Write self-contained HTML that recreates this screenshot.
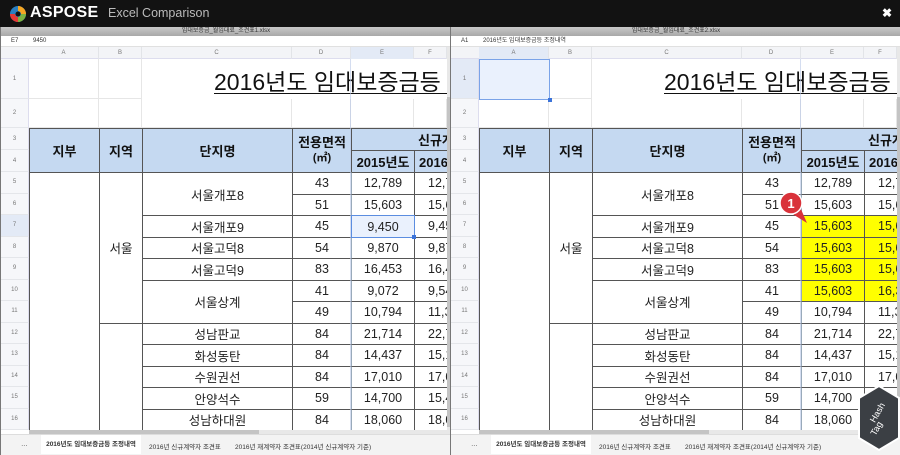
<!DOCTYPE html>
<html><head><meta charset="utf-8">
<style>
*{box-sizing:border-box;margin:0;padding:0}
body{width:900px;height:455px;overflow:hidden;background:#fff;font-family:"Liberation Sans","Noto Sans CJK KR",sans-serif;position:relative}
#top{position:absolute;left:0;top:0;width:900px;height:27px;background:#121212;color:#fff}
.pane{position:absolute;top:27px;height:428px;overflow:hidden;background:#fff;border-left:1px solid #777}
.abs{position:absolute}
.c{position:absolute;display:flex;align-items:center;justify-content:center;font-size:12.5px;color:#222;white-space:nowrap;overflow:hidden}
.rh{position:absolute;left:0;width:28px;font-size:6px;color:#777;display:flex;align-items:center;justify-content:center;background:#f6f7fa;border-bottom:1px solid #e4e6ea;border-right:1px solid #dde}
</style></head><body>
<div id="top">
 <svg class="abs" style="left:9px;top:5px" width="18" height="18" viewBox="0 0 18 18">
  <circle cx="9" cy="9" r="8" fill="#2a7fc1"/>
  <path d="M9 1a8 8 0 0 1 8 8h-5a3 3 0 0 0-3-3z" fill="#f5a623"/>
  <path d="M17 9a8 8 0 0 1-8 8v-5a3 3 0 0 0 3-3z" fill="#7cb342"/>
  <path d="M9 17a8 8 0 0 1-8-8h5a3 3 0 0 0 3 3z" fill="#e53935"/>
  <circle cx="9" cy="9" r="2.5" fill="#121212"/>
 </svg>
 <div class="abs" style="left:30px;top:4px;font-size:16px;font-weight:bold;letter-spacing:0.3px">ASPOSE</div>
 <div class="abs" style="left:108px;top:6px;font-size:12.5px;color:#bbb">Excel Comparison</div>
 <div class="abs" style="left:882px;top:6px;font-size:12px;font-weight:bold">✖</div>
</div>
<div id="L" class="pane" style="left:0;width:450px"></div>
<div id="R" class="pane" style="left:450px;width:450px"></div>
<svg class="abs" style="left:776px;top:190px" width="40" height="40" viewBox="0 0 40 40">
 <path d="M10 20 L31 33 L24 17 Z" fill="#d9323a"/>
 <circle cx="15" cy="13" r="11" fill="#d9323a" stroke="#fff" stroke-width="1.5"/>
 <text x="15" y="18" font-size="13" font-weight="bold" fill="#fff" text-anchor="middle" font-family="Liberation Sans">1</text>
</svg>
<svg class="abs" style="left:858px;top:384px" width="42" height="68" viewBox="0 0 42 68">
 <path d="M21 2 L41 14 L41 54 L21 66 L1 54 L1 14 Z" fill="#3b3f44" stroke="#fff" stroke-width="2"/>
 <text x="22" y="30" font-size="9" fill="#fff" text-anchor="middle" transform="rotate(-60 22 30)" font-family="Liberation Sans">Hash</text>
 <text x="21" y="46" font-size="9" fill="#fff" text-anchor="middle" transform="rotate(-60 21 46)" font-family="Liberation Sans">Tag</text>
</svg>
<script>
function build(id,file,ref,formula,right){
 var p=document.getElementById(id),h='';
 h+='<div class="abs" style="left:0;top:0;width:450px;height:9px;background:linear-gradient(#c8c8c8,#a8a8a8);font-size:6px;color:#333;text-align:center;line-height:9px">'+file+'</div>';
 h+='<div class="abs" style="left:0;top:9px;width:450px;height:11px;background:#fff;border-bottom:1px solid #e0e0e0;font-size:6px;color:#333;line-height:11px"><span class="abs" style="left:10px">'+ref+'</span><span class="abs" style="left:32px">'+formula+'</span></div>';
 var cols=[[28,98,'A'],[98,141,'B'],[141,291,'C'],[291,350,'D'],[350,413,'E'],[413,446,'F']];
 h+='<div class="abs" style="left:0;top:20px;width:450px;height:12px;background:#f3f4f7;border-bottom:1px solid #dde"></div>';
 cols.forEach(function(c){var sel=(right?c[2]=='A':c[2]=='E');h+='<div class="c" style="left:'+c[0]+'px;top:20px;width:'+(c[1]-c[0])+'px;height:12px;font-size:6px;color:#777;border-right:1px solid #e2e4e8;background:'+(sel?'#e3eaf6':'transparent')+'">'+c[2]+'</div>';});
 var rt=[32,72,101,123];for(var k=5;k<=17;k++)rt.push(145+(k-5)*21.5);
 function R(k){return rt[k-1]} function X(i){return cols[i][0]} function X2(i){return cols[i][1]}
 for(var k=1;k<=16;k++){var sel=(right?k==1:k==7);h+='<div class="rh" style="top:'+R(k)+'px;height:'+(R(k+1)-R(k))+'px;background:'+(sel?'#e3eaf6':'#f6f7fa')+'">'+k+'</div>';}
 for(var k=1;k<=2;k++)cols.forEach(function(c){h+='<div class="abs" style="left:'+c[0]+'px;top:'+R(k)+'px;width:'+(c[1]-c[0])+'px;height:'+(R(k+1)-R(k))+'px;border-right:1px solid #e6e6e6;border-bottom:1px solid #e6e6e6"></div>';});
 h+='<div class="abs" style="left:141px;top:32px;width:305px;height:40px;background:#fff"></div>';
 if(right)h+='<div class="abs" style="left:28px;top:32px;width:71px;height:41px;background:#eaf1fd;border:1px solid #7aa3e8"></div>';
 h+='<div class="abs" style="left:213px;top:36px;width:300px;font-size:23px;color:#111;text-decoration:underline;white-space:nowrap;text-decoration-thickness:1px;text-underline-offset:3px">2016년도 임대보증금등 조정내역</div>';
 function cell(i1,i2,k1,k2,txt,st){h+='<div class="c" style="left:'+X(i1)+'px;top:'+R(k1)+'px;width:'+(X2(i2)-X(i1)+1)+'px;height:'+(R(k2+1)-R(k1)+1)+'px;border:1px solid #555;'+(st||'')+'">'+txt+'</div>';}
 var hd='background:#c5d9f1;font-weight:bold;font-size:13px;color:#111;';
 cell(0,0,3,4,'지부',hd);cell(1,1,3,4,'지역',hd);cell(2,2,3,4,'단지명',hd);
 cell(3,3,3,4,'<div style="text-align:center;line-height:14px">전용면적<br><span style="font-size:11px">(㎡)</span></div>',hd);
 cell(4,5,3,3,'신규계약자',hd+'justify-content:flex-start;padding-left:66px');
 cell(4,4,4,4,'2015년도',hd);cell(5,5,4,4,'2016년도',hd+'justify-content:flex-start;padding-left:4px');
 cell(0,0,5,16,'');cell(1,1,5,11,'서울');cell(1,1,12,16,'');
 var names=[[5,6,'서울개포8'],[7,7,'서울개포9'],[8,8,'서울고덕8'],[9,9,'서울고덕9'],[10,11,'서울상계'],[12,12,'성남판교'],[13,13,'화성동탄'],[14,14,'수원권선'],[15,15,'안양석수'],[16,16,'성남하대원']];
 names.forEach(function(n){cell(2,2,n[0],n[1],n[2]);});
 var d=[[43,'12,789','12,789'],[51,'15,603','15,603'],[45,'9,450','9,450'],[54,'9,870','9,870'],[83,'16,453','16,453'],[41,'9,072','9,540'],[49,'10,794','11,334'],[84,'21,714','22,799'],[84,'14,437','15,158'],[84,'17,010','17,010'],[59,'14,700','15,435'],[84,'18,060','18,060']];
 var rf=['15,603','15,603','15,603','16,383'];
 d.forEach(function(r,j){var k=j+5,y=right&&k>=7&&k<=10;
  var e=y?'15,603':r[1],f=y?rf[k-7]:r[2];
  cell(3,3,k,k,r[0]);
  cell(4,4,k,k,e,(y?'background:#ffff00;':'')+'border-left-color:#9ab;');
  cell(5,5,k,k,f,(y?'background:#ffff00;':'')+'justify-content:flex-start;padding-left:13px');
 });
 if(!right)h+='<div class="abs" style="left:350px;top:'+R(7)+'px;width:64px;height:23px;border:1.5px solid #5b8de0;background:#eaf1fd;display:flex;align-items:center;justify-content:center;font-size:12.5px;color:#222">9,450</div><div class="abs" style="left:411px;top:'+(R(8)-2)+'px;width:4px;height:4px;background:#3b73d9"></div>';
 if(right)h+='<div class="abs" style="left:97px;top:71px;width:4px;height:4px;background:#3b73d9"></div>';
 h+='<div class="abs" style="left:349px;top:32px;width:1px;height:396px;background:#b8c6e6;opacity:.6"></div>';
 h+='<div class="abs" style="left:446px;top:20px;width:4px;height:388px;background:#e8e8e8"></div><div class="abs" style="left:446px;top:70px;width:4px;height:330px;background:#c4c4c4"></div>';
 h+='<div class="abs" style="left:28px;top:403px;width:418px;height:4px;background:#e8e8e8"></div><div class="abs" style="left:28px;top:403px;width:230px;height:4px;background:#c4c4c4"></div>';
 h+='<div class="abs" style="left:0;top:407px;width:450px;height:21px;background:#f3f3f3;border-top:1px solid #ddd;font-size:6.5px;color:#333">'+
 '<span class="abs" style="left:20px;top:6px">…</span>'+
 '<span class="abs" style="left:40px;top:0;height:19px;width:100px;background:#fff;line-height:19px;text-align:center;font-weight:bold">2016년도 임대보증금등 조정내역</span>'+
 '<span class="abs" style="left:148px;top:6px">2016년 신규계약자 조견표</span>'+
 '<span class="abs" style="left:234px;top:6px">2016년 재계약자 조견표(2014년 신규계약자 기준)</span></div>';
 p.innerHTML=h;
}
build('L','임대보증금_월임대료_조견표1.xlsx','E7','9450',false);
build('R','임대보증금_월임대료_조견표2.xlsx','A1','2016년도 임대보증금등 조정내역',true);
</script>
</body></html>
